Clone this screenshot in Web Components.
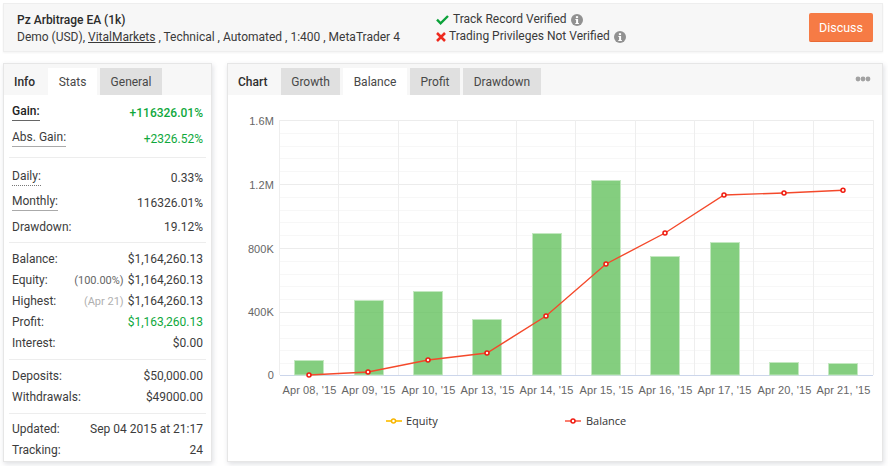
<!DOCTYPE html>
<html><head><meta charset="utf-8"><title>Pz Arbitrage EA</title>
<style>
html,body{margin:0;padding:0;background:#fff}
body{width:888px;height:466px;overflow:hidden;font:12px/17px Roboto,sans-serif;color:#3a3a3a}
</style></head><body>
<fx-page>
  <fx-header slot="top">
    <span slot="title">Pz Arbitrage EA (1k)</span>
    <span slot="meta">Demo (USD), <u>VitalMarkets</u> , Technical , Automated , 1:400 , MetaTrader 4</span>
    <fx-verify slot="v" kind="ok">Track Record Verified</fx-verify>
    <fx-verify slot="v" kind="no">Trading Privileges Not Verified</fx-verify>
    <fx-button slot="action">Discuss</fx-button>
  </fx-header>
  <fx-panel slot="left" style="width:209px">
    <fx-tab slot="tabs" lead style="--w:44px">Info</fx-tab>
    <fx-tab slot="tabs" on style="--w:49px">Stats</fx-tab>
    <fx-tab slot="tabs" style="--w:62px">General</fx-tab>
    <fx-group pad="5px 0 5px">
      <fx-row h="26" mark="solid" strong value-color="#0fa83c" label="Gain:" value="+116326.01%"></fx-row>
      <fx-row h="26" mark="solid" value-color="#0fa83c" label="Abs. Gain:" value="+2326.52%"></fx-row>
    </fx-group>
    <fx-group pad="7px 0 4px">
      <fx-row h="26" mark="dotted" label="Daily:" value="0.33%"></fx-row>
      <fx-row h="25" mark="solid" label="Monthly:" value="116326.01%"></fx-row>
      <fx-row h="22" label="Drawdown:" value="19.12%"></fx-row>
    </fx-group>
    <fx-group pad="5px 0 5px">
      <fx-row h="22" label="Balance:" value="$1,164,260.13"></fx-row>
      <fx-row label="Equity:" note="(100.00%)" note-color="#666" value="$1,164,260.13"></fx-row>
      <fx-row label="Highest:" note="(Apr 21)" value="$1,164,260.13"></fx-row>
      <fx-row label="Profit:" value-color="#0fa83c" value="$1,163,260.13"></fx-row>
      <fx-row label="Interest:" value="$0.00"></fx-row>
    </fx-group>
    <fx-group pad="6px 0 5px">
      <fx-row label="Deposits:" value="$50,000.00"></fx-row>
      <fx-row label="Withdrawals:" value="$49000.00"></fx-row>
    </fx-group>
    <fx-group last pad="5px 0 0">
      <fx-row label="Updated:" value="Sep 04 2015 at 21:17"></fx-row>
      <fx-row label="Tracking:" value="24"></fx-row>
    </fx-group>
  </fx-panel>
  <fx-panel slot="right" style="width:656px">
    <fx-tab slot="tabs" lead style="--w:53px">Chart</fx-tab>
    <fx-tab slot="tabs" style="--w:59px">Growth</fx-tab>
    <fx-tab slot="tabs" on style="--w:64px">Balance</fx-tab>
    <fx-tab slot="tabs" style="--w:50px">Profit</fx-tab>
    <fx-tab slot="tabs" style="--w:78px">Drawdown</fx-tab>
    <fx-dots slot="tools"></fx-dots>
    <fx-chart></fx-chart>
  </fx-panel>
</fx-page>
<script>
function def(name,css,html){
  customElements.define(name,class extends HTMLElement{
    connectedCallback(){
      if(this.shadowRoot)return;
      const s=this.attachShadow({mode:'open'});
      s.innerHTML='<style>'+css+'</style>'+(typeof html==='function'?html(this):html);
    }
  });
}
const esc=v=>v==null?'':String(v);

def('fx-page',
 `:host{display:block;box-sizing:border-box;width:888px;height:466px;padding:3px 5px 0 3px}
  .cols{display:flex;gap:15px;margin-top:11px}`,
 `<slot name="top"></slot><div class="cols"><slot name="left"></slot><slot name="right"></slot></div>`);

def('fx-header',
 `:host{display:flex;align-items:center;box-sizing:border-box;height:49px;background:#f7f7f7;border:1px solid #eee;padding:0 9px 0 13px;box-shadow:0 1px 2px rgba(0,0,0,.05)}
  .a{width:419px;line-height:17px;font-size:12px;padding-top:2px}
  .title{font-weight:500;color:#2b2b2b;display:block}
  .meta{display:block}
  .v{display:flex;flex-direction:column;flex:1;padding-top:1px}`,
 `<div class="a"><span class="title"><slot name="title"></slot></span><span class="meta"><slot name="meta"></slot></span></div>
  <div class="v"><slot name="v"></slot></div><slot name="action"></slot>`);

const info=`<svg width="12" height="12" viewBox="0 0 12 12" style="margin-left:4px;flex:none"><circle cx="6" cy="6" r="6" fill="#919191"/><rect x="4.9" y="2.2" width="2.2" height="1.9" fill="#fff"/><path d="M4.4 5h2.7v3.9h.8v1H4.3v-1h.8V6h-.7z" fill="#fff"/></svg>`;
def('fx-verify',
 `:host{display:flex;align-items:center;height:17px;font-size:12px}
  svg.k{flex:none}`,
 h=>(h.getAttribute('kind')==='ok'
   ?`<svg class="k" width="13" height="10" viewBox="0 0 13 10" style="margin-right:4px"><path d="M1 4.7l3.6 3.6L12 1" fill="none" stroke="#0ca23a" stroke-width="2.4"/></svg>`
   :`<svg class="k" width="10" height="10" viewBox="0 0 10 10" style="margin-right:3px"><path d="M1 1l8 8M9 1L1 9" fill="none" stroke="#ee2a1f" stroke-width="2.5"/></svg>`)
  +`<slot></slot>`+info);

def('fx-button',
 `:host{display:flex;align-items:center;justify-content:center;box-sizing:border-box;width:64px;height:29px;background:#f67b45;border-bottom:1px solid #e96a35;border-radius:2px;color:#fff;font-size:12.5px;flex:none;padding-top:1px}`,
 `<slot></slot>`);

def('fx-panel',
 `:host{display:flex;flex-direction:column;box-sizing:border-box;height:399px;background:#fff;border:1px solid #e6e6e6;box-shadow:1px 2px 5px rgba(70,75,100,.18)}
  .bar{display:flex;height:31px;flex:none;background:#f7f7f7;align-items:stretch;padding-top:4px;box-sizing:border-box}
  .tabs{display:flex;gap:3px}
  .tools{margin-left:auto}
  .body{flex:1;min-height:0}`,
 `<div class="bar"><div class="tabs"><slot name="tabs"></slot></div><div class="tools"><slot name="tools"></slot></div></div><div class="body"><slot></slot></div>`);

def('fx-tab',
 `:host{display:block;box-sizing:border-box;width:var(--w);padding-top:1px;line-height:26px;text-align:center;background:#e0e0e0;color:#484848;font-size:12px}
  :host([on]){background:#fff}
  :host([lead]){background:transparent;text-align:left;padding-left:10px;font-weight:500;color:#2e2e2e;margin-right:-3px}`,
 `<slot></slot>`);

def('fx-dots',
 `:host{display:block;padding:8px 11px 0 0}`,
 `<svg width="16" height="6" viewBox="0 0 16 6" style="display:block"><g fill="#a2a2a2"><circle cx="3" cy="3" r="2.4"/><circle cx="8" cy="3" r="2.4"/><circle cx="13" cy="3" r="2.4"/></g></svg>`);

def('fx-group',
 `:host{display:block;margin:0 5px;padding:var(--p);border-bottom:1px solid #ededed}
  :host([last]){border-bottom:0}`,
 h=>{h.style.setProperty('--p',h.getAttribute('pad')||'0');return '<slot></slot>';});

def('fx-row',
 `:host{display:flex;align-items:center;justify-content:space-between;height:var(--h,21px);padding:0 3px;color:#3c3c3c;white-space:nowrap}
  .l{display:block}
  .l.m{padding-bottom:1px;margin-bottom:2px;border-bottom:1px solid #aaa;line-height:15px}
  .l.dotted{border-bottom:1px dotted #777}
  :host([strong]) .l{font-weight:500;color:#222;border-color:#666}
  :host([strong]) .v{font-weight:500}
  .n{margin-right:4px;color:#b0b0b0;font-size:11px}`,
 h=>{
   const a=n=>h.getAttribute(n);
   if(a('h'))h.style.setProperty('--h',a('h')+'px');
   const m=a('mark');
   const nc=a('note-color')?` style="color:${a('note-color')}"`:'';
   const vc=a('value-color')?` style="color:${a('value-color')}"`:'';
   return `<span class="l${m?' m '+m:''}">${esc(a('label'))}</span><span>${a('note')?`<span class="n"${nc}>${esc(a('note'))}</span>`:''}<span class="v"${vc}>${esc(a('value'))}</span></span>`;
 });

const xs=[309,368,428,487,546,606,665,724,784,843];
const labels=["Apr 08, '15","Apr 09, '15","Apr 10, '15","Apr 13, '15","Apr 14, '15","Apr 15, '15","Apr 16, '15","Apr 17, '15","Apr 20, '15","Apr 21, '15"];
const tops=[360.5,300.5,291.5,319.5,233.5,180.5,256.5,242.5,362.5,363.5];
const ln=[375,372,360,353,316,264,233,195,193,190.3];
const bx=[295,355,414,473,533,592,651,711,770,829];
const vg=[338.5,398.5,457.5,516.5,575.5,635.5,694.5,753.5,813.5];
const hg=[120.5,184.5,248.5,312.5];
function chart(){
  let s='';
  for(let i=0;i<4;i++)for(let j=1;j<5;j++){const y=hg[i]+j*12.75;s+=`<line x1="280" x2="873" y1="${Math.floor(y)+.5}" y2="${Math.floor(y)+.5}" stroke="#f7f7f7"/>`;}
  hg.forEach(y=>s+=`<line x1="280" x2="873" y1="${y}" y2="${y}" stroke="#ececec"/>`);
  [279.5,...vg,873.5].forEach(x=>s+=`<line x1="${x}" x2="${x}" y1="120" y2="375" stroke="#eeeeee"/>`);
  s+=`<line x1="280" x2="873" y1="375.5" y2="375.5" stroke="#ccd6eb"/>`;
  bx.forEach((x,i)=>s+=`<rect x="${x-.5}" y="${tops[i]}" width="29" height="${375-tops[i]}" fill="rgba(101,194,95,.8)" stroke="#c4e8c1"/>`);
  const pts=xs.map((x,i)=>x+','+ln[i]).join(' ');
  s+=`<polyline points="${pts}" fill="none" stroke="#f4492b" stroke-width="1.4"/>`;
  xs.forEach((x,i)=>s+=`<circle cx="${x}" cy="${ln[i]}" r="2" fill="#fff3e6" stroke="#f01a10" stroke-width="1.5"/>`);
  [['1.6M',121],['1.2M',185],['800K',248.5],['400K',312],['0',375]].forEach(([t,y])=>s+=`<text class="ax" x="274" y="${y+4}" text-anchor="end">${t}</text>`);
  labels.forEach((t,i)=>s+=`<text class="ax" x="${xs[i]+.5}" y="394" text-anchor="middle">${t}</text>`);
  s+=`<line x1="386" x2="402" y1="421" y2="421" stroke="#fdc92f" stroke-width="2"/><circle cx="393.5" cy="421" r="2" fill="#fff" stroke="#f7b500" stroke-width="1.5"/><text class="lg" x="406" y="424.5">Equity</text>`;
  s+=`<line x1="565" x2="581" y1="421" y2="421" stroke="#fb7d6e" stroke-width="2"/><circle cx="573" cy="421" r="2" fill="#fff" stroke="#f01a10" stroke-width="1.5"/><text class="lg" x="586" y="424.5">Balance</text>`;
  return `<svg viewBox="228 95 654 366" width="654" height="366">${s}</svg>`;
}
def('fx-chart',
 `:host{display:block;width:654px;height:366px}
  svg{display:block}
  .ax{font:11px "Liberation Sans",Arial,sans-serif;fill:#666;letter-spacing:.1px}
  .lg{font:11px "Open Sans",sans-serif;fill:#333}`,
 chart);
</script>
</body></html>
